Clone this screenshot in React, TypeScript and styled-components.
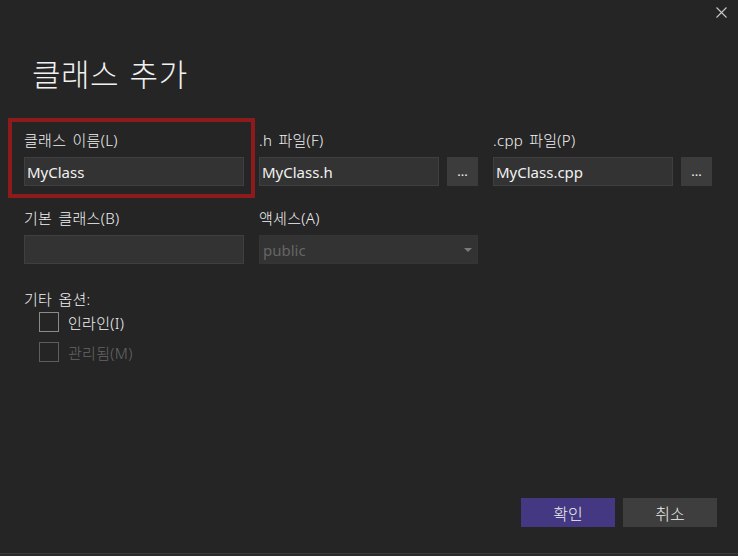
import React from "react";
import styled, { createGlobalStyle } from "styled-components";

const Global = createGlobalStyle`
  html, body { margin: 0; padding: 0; background: #252526; }
  body {
    font-family: "Noto Sans", "Noto Sans CJK KR", sans-serif;
    color: #f1f1f1;
  }
  * { box-sizing: border-box; }
`;

const Dialog = styled.div`
  width: 738px;
  height: 556px;
  display: flex;
  flex-direction: column;
  background: #252526;
  overflow: hidden;
`;

const TopBar = styled.div`
  display: flex;
  justify-content: flex-end;
  padding: 7px 11px 0 0;
  height: 26px;
`;

const CloseButton = styled.button`
  width: 11px;
  height: 11px;
  padding: 0;
  border: none;
  background: transparent;
  display: flex;
  cursor: pointer;
`;

const Title = styled.h1`
  margin: 30px 0 0 32px;
  font-size: 31px;
  line-height: 36px;
  font-weight: 300;
  letter-spacing: 0.5px;
  word-spacing: 2px;
  color: #f1f1f1;
`;

const FormGrid = styled.div`
  display: grid;
  grid-template-columns: 220px 219px 219px;
  column-gap: 15px;
  row-gap: 22px;
  margin: 38px 0 0 24px;
`;

const Field = styled.div<{ $highlight?: boolean }>`
  position: relative;
  display: flex;
  flex-direction: column;
  gap: 7px;

  ${(p) =>
    p.$highlight &&
    `
    &::before {
      content: "";
      position: absolute;
      left: -16px;
      right: -11px;
      top: -12px;
      bottom: -12px;
      border: 4px solid #8e1b1b;
      pointer-events: none;
    }
  `}
`;

const Label = styled.label`
  font-size: 15px;
  line-height: 20px;
  font-weight: 300;
  letter-spacing: 0.3px;
  word-spacing: 2px;
  color: #f1f1f1;
  white-space: nowrap;
`;

const InputRow = styled.div`
  display: flex;
  gap: 8px;
`;

const TextBox = styled.div<{ $width?: number }>`
  width: ${(p) => (p.$width ? `${p.$width}px` : "100%")};
  height: 29px;
  background: #333333;
  border: 1px solid #3f3f42;
  padding: 0 2px;
  display: flex;
  align-items: center;
  font-size: 15px;
  color: #f1f1f1;
`;

const BrowseButton = styled.button`
  width: 31px;
  height: 29px;
  background: #3c3c3c;
  border: none;
  padding: 0;
  color: #f1f1f1;
  font-family: "Noto Sans", sans-serif;
  font-size: 13px;
  line-height: 29px;
`;

const Select = styled.div`
  height: 29px;
  background: #333333;
  border: 1px solid #353535;
  padding: 0 5px 0 3px;
  display: flex;
  align-items: center;
  justify-content: space-between;
  font-size: 15px;
  color: #656565;
`;

const Options = styled.div`
  margin: 25px 0 0 24px;
  display: flex;
  flex-direction: column;
`;

const CheckList = styled.div`
  display: flex;
  flex-direction: column;
  gap: 10px;
  margin: 3px 0 0 15px;
`;

const CheckRow = styled.div<{ $disabled?: boolean }>`
  display: flex;
  align-items: center;
  gap: 9px;
  height: 20px;
  font-size: 15px;
  font-weight: 300;
  letter-spacing: 0.3px;
  color: ${(p) => (p.$disabled ? "#666666" : "#f1f1f1")};
`;

const Box = styled.span<{ $disabled?: boolean }>`
  width: 20px;
  height: 20px;
  border: 1px solid ${(p) => (p.$disabled ? "#5e5e5e" : "#8a8a8a")};
  background: transparent;
`;

const Footer = styled.div`
  margin-top: auto;
  display: flex;
  justify-content: flex-end;
  gap: 8px;
  padding: 0 21px 26px 0;
`;

const DialogButton = styled.button<{ $primary?: boolean }>`
  width: 94px;
  height: 29px;
  border: none;
  background: ${(p) => (p.$primary ? "#433881" : "#3e3e3e")};
  color: #f1f1f1;
  font-family: "Noto Sans", "Noto Sans CJK KR", sans-serif;
  font-size: 16px;
  font-weight: 300;
`;

const BottomEdge = styled.div`
  height: 3px;
  border-top: 1px solid #3a3a3a;
  background: #2b2b2b;
`;

export default function App() {
  return (
    <>
      <Global />
      <Dialog>
        <TopBar>
          <CloseButton aria-label="닫기">
            <svg width="11" height="11" viewBox="0 0 11 11">
              <path d="M0.5 0.5 L10.5 10.5 M10.5 0.5 L0.5 10.5" stroke="#c8c8c8" strokeWidth="1.1" />
            </svg>
          </CloseButton>
        </TopBar>
        <Title>클래스 추가</Title>
        <FormGrid>
          <Field $highlight>
            <Label>클래스 이름(L)</Label>
            <TextBox>MyClass</TextBox>
          </Field>
          <Field>
            <Label>.h 파일(F)</Label>
            <InputRow>
              <TextBox $width={180}>MyClass.h</TextBox>
              <BrowseButton>...</BrowseButton>
            </InputRow>
          </Field>
          <Field>
            <Label>.cpp 파일(P)</Label>
            <InputRow>
              <TextBox $width={180}>MyClass.cpp</TextBox>
              <BrowseButton>...</BrowseButton>
            </InputRow>
          </Field>
          <Field>
            <Label>기본 클래스(B)</Label>
            <TextBox />
          </Field>
          <Field>
            <Label>액세스(A)</Label>
            <Select>
              <span>public</span>
              <svg width="8" height="4" viewBox="0 0 8 4">
                <path d="M0 0 H8 L4 4 Z" fill="#7a7a7a" />
              </svg>
            </Select>
          </Field>
        </FormGrid>
        <Options>
          <Label>기타 옵션:</Label>
          <CheckList>
            <CheckRow>
              <Box />
              <span>인라인(I)</span>
            </CheckRow>
            <CheckRow $disabled>
              <Box $disabled />
              <span>관리됨(M)</span>
            </CheckRow>
          </CheckList>
        </Options>
        <Footer>
          <DialogButton $primary>확인</DialogButton>
          <DialogButton>취소</DialogButton>
        </Footer>
        <BottomEdge />
      </Dialog>
    </>
  );
}
